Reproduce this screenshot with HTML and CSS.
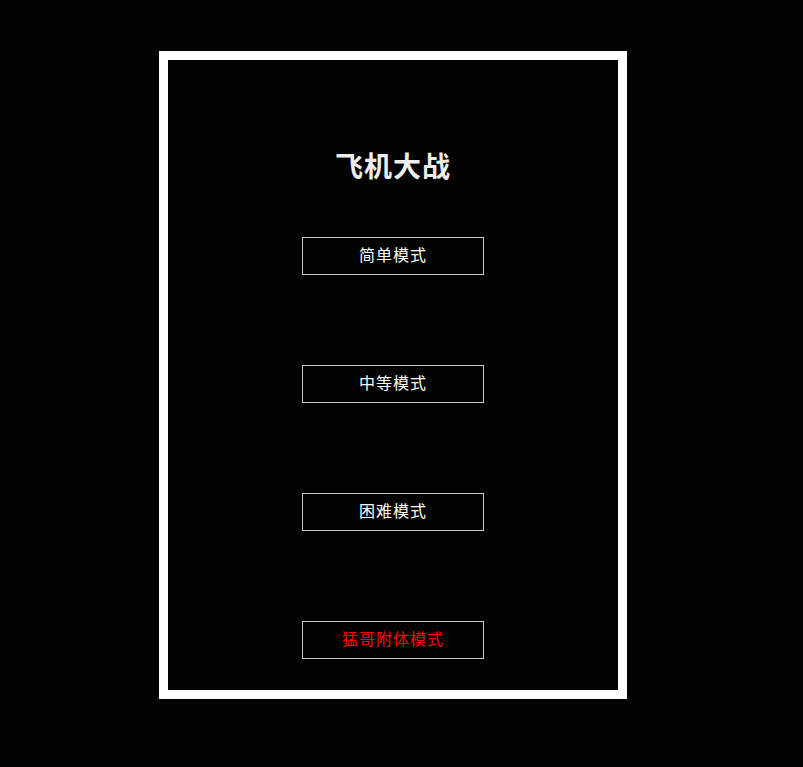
FILE: index.html
```html
<!DOCTYPE html>
<html lang="zh">
<head>
<meta charset="utf-8">
<title>飞机大战</title>
<link rel="stylesheet" href="styles.css">
</head>
<body>
<div class="frame">
  <h1 class="title">飞机大战</h1>
  <div class="menu">
    <button class="btn">简单模式</button>
    <button class="btn">中等模式</button>
    <button class="btn">困难模式</button>
    <button class="btn btn-red">猛哥附体模式</button>
  </div>
</div>
</body>
</html>
```
FILE: styles.css
```css
html, body {
  margin: 0;
  padding: 0;
  background: #030303;
  height: 100%;
}
body {
  font-family: "Noto Sans CJK SC", "Noto Sans", sans-serif;
}
.frame {
  box-sizing: border-box;
  width: 468px;
  height: 648px;
  margin: 51px 0 0 159px;
  border: 9px solid #ffffff;
  background: #030303;
  padding-top: 85px;
  display: flex;
  flex-direction: column;
  align-items: center;
}
.title {
  margin: 0;
  height: 40px;
  line-height: 40px;
  font-size: 28px;
  font-weight: 700;
  color: #eeeeee;
  letter-spacing: 1px;
  font-family: "Noto Sans CJK SC", serif;
}
.menu {
  margin-top: 52px;
  display: flex;
  flex-direction: column;
  align-items: center;
  gap: 90px;
}
.btn {
  box-sizing: border-box;
  width: 182px;
  height: 38px;
  background: transparent;
  border: 1px solid #c8c8c8;
  color: #ffffff;
  font-family: "Noto Sans CJK SC", sans-serif;
  font-size: 16px;
  letter-spacing: 1px;
  padding: 0 0 3px 0;
  line-height: 33px;
}
.btn-red {
  color: #ff0000;
}
```
